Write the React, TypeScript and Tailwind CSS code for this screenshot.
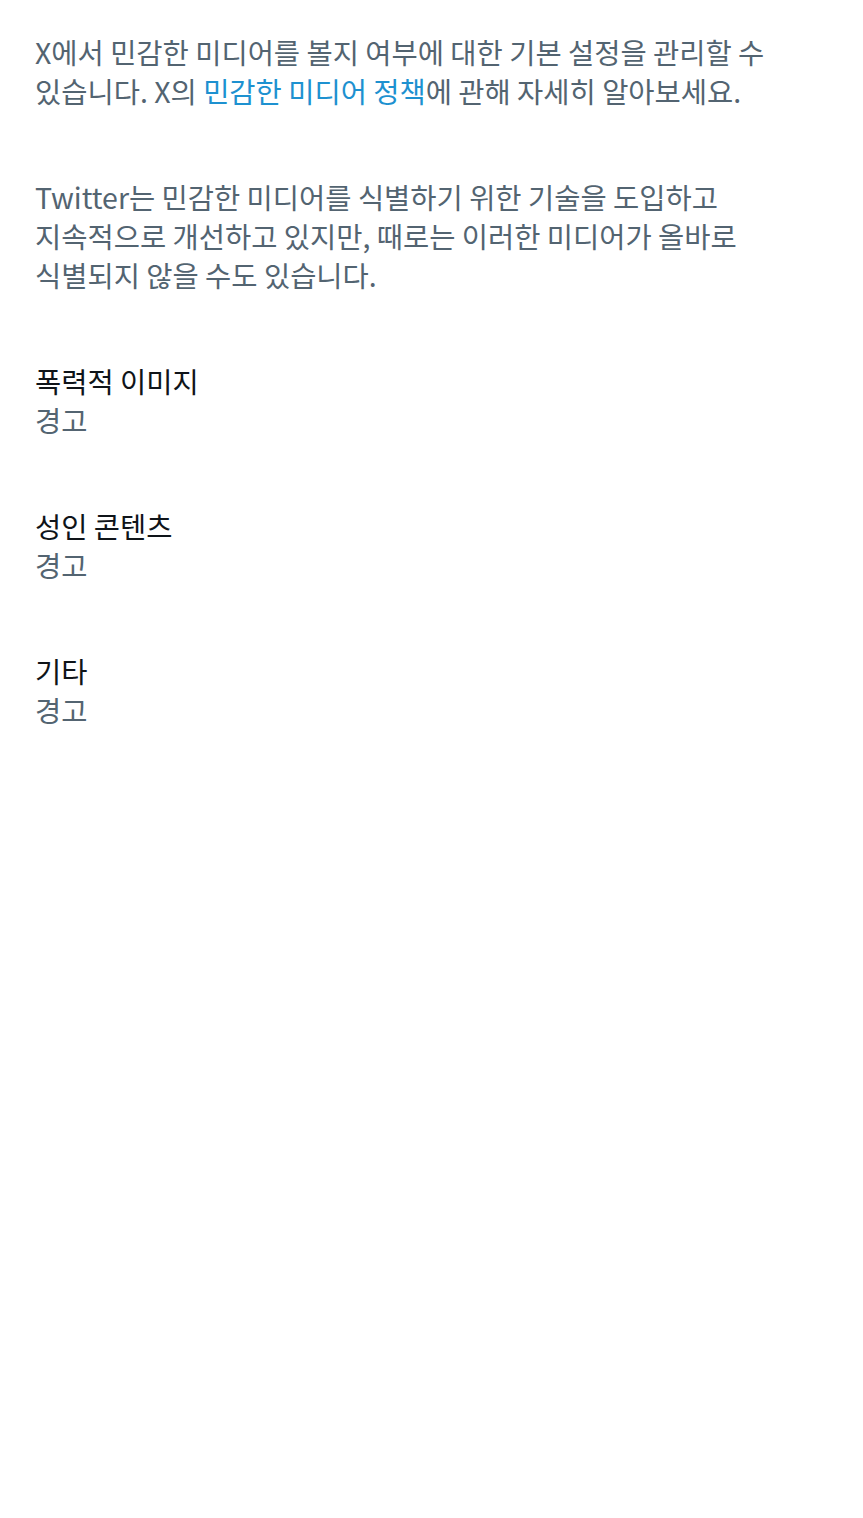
import React from "react";

const font = { fontFamily: '"Noto Sans CJK KR", "Noto Sans", sans-serif' };

function Item({ title }: { title: string }) {
  return (
    <div className="flex flex-col">
      <div className="text-[#0f1419]">{title}</div>
      <div className="text-[#536471]">경고</div>
    </div>
  );
}

export default function App() {
  return (
    <div
      className="min-h-[1518px] w-full bg-white px-[35px] pt-[32px] text-[28.5px] leading-[39px] break-keep flex flex-col gap-[67px]"
      style={font}
    >
      <p className="text-[#536471]">
        X에서 민감한 미디어를 볼지 여부에 대한 기본 설정을 관리할 수 있습니다. X의{" "}
        <span className="text-[#1d91d0]">민감한 미디어 정책</span>에 관해 자세히 알아보세요.
      </p>
      <p className="text-[#536471]">
        Twitter는 민감한 미디어를 식별하기 위한 기술을 도입하고 지속적으로 개선하고 있지만, 때로는 이러한 미디어가 올바로 식별되지 않을 수도 있습니다.
      </p>
      <Item title="폭력적 이미지" />
      <Item title="성인 콘텐츠" />
      <Item title="기타" />
    </div>
  );
}
